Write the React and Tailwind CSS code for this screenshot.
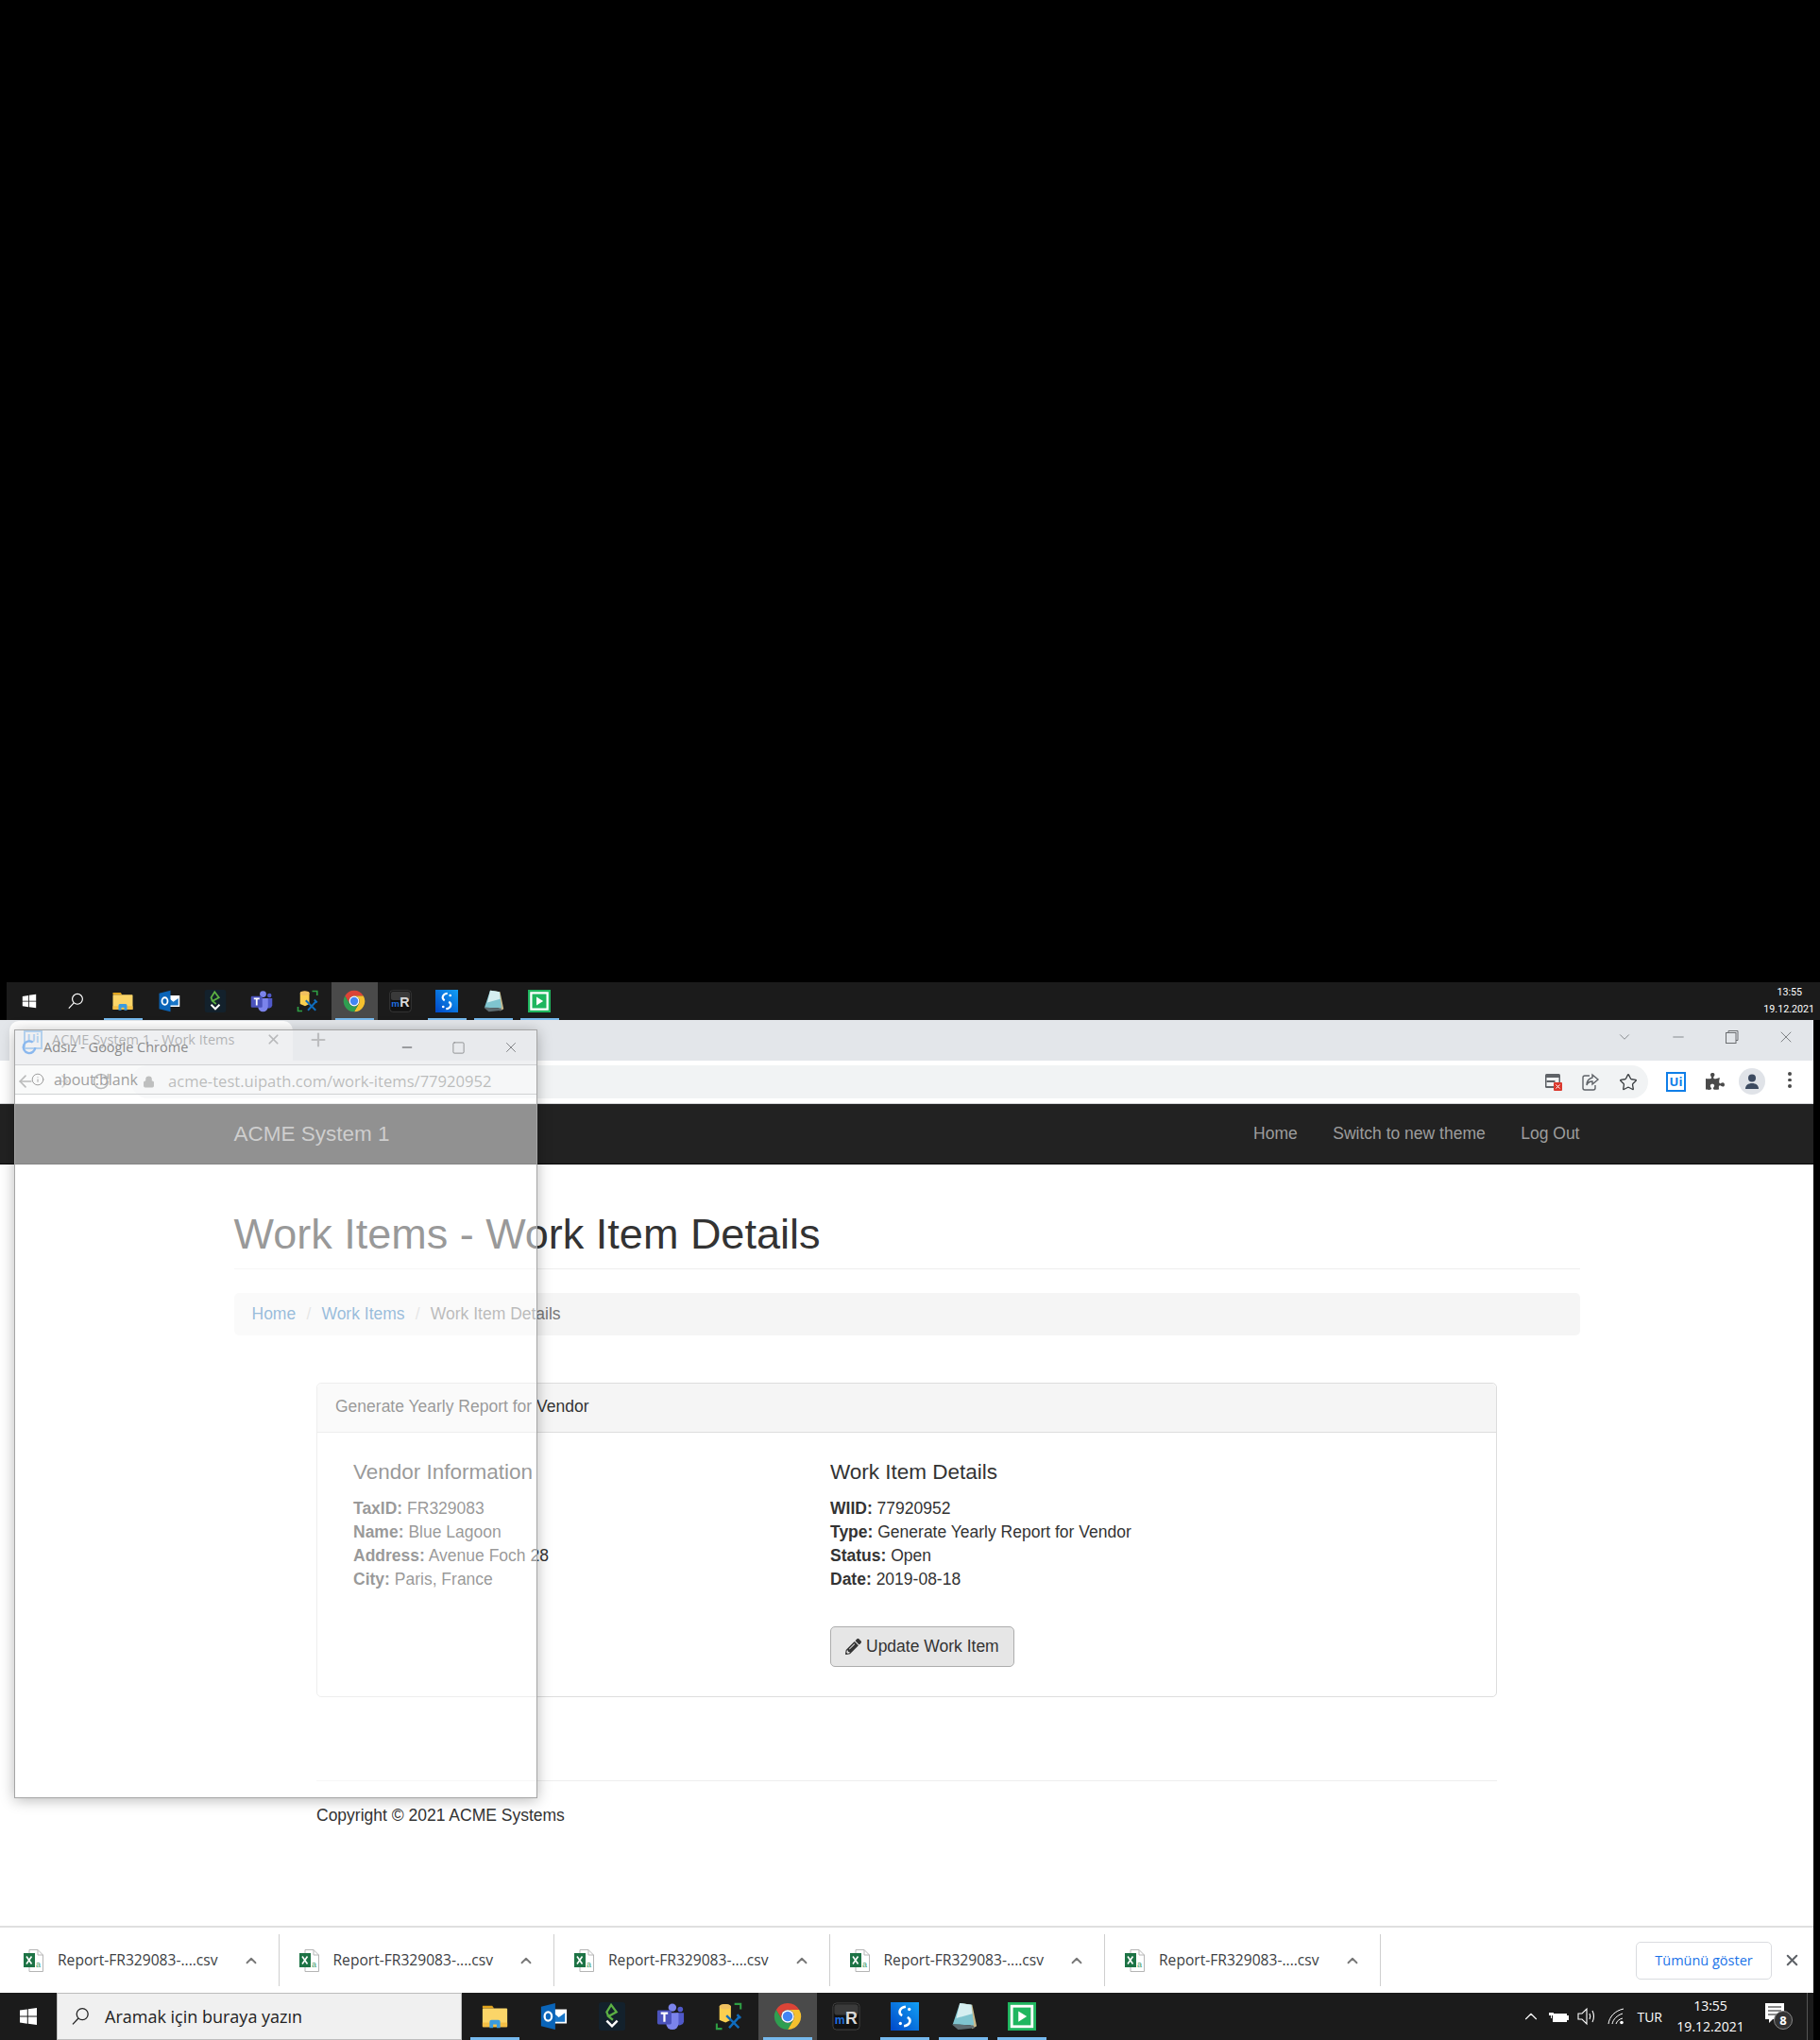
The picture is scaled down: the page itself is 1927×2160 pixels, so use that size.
import { FaPuzzlePiece, FaPencilAlt } from 'react-icons/fa'
import { Star, Lock, X, Plus, ChevronUp, ChevronDown, Minus, Square, RotateCw, ArrowLeft, ArrowRight, Info } from 'lucide-react'

const UI_FONT = { fontFamily: '"Open Sans", "Noto Sans", sans-serif' }

// ---- taskbar app icons, all on a 32 box ----
function WinLogo({ size = 20 }) {
  return (
    <svg width={size} height={size} viewBox="0 0 20 20" fill="#fff">
      <path d="M1 3.6 8.8 2.4v7.2H1zM9.8 2.3 19 1v8.6H9.8zM1 10.6h7.8v7.1L1 16.5zM9.8 10.6H19V19l-9.2-1.3z" />
    </svg>
  )
}

function SearchGlass({ size = 20 }) {
  return (
    <svg width={size} height={size} viewBox="0 0 20 20" fill="none" stroke="#fff" strokeWidth="1.3">
      <circle cx="12.2" cy="7.6" r="6" />
      <path d="M8 12 2 18.4" />
    </svg>
  )
}

function Explorer() {
  return (
    <svg viewBox="0 0 32 32" className="h-full w-full">
      <path d="M2 4h11l2 3H2z" fill="#e0a31c" />
      <rect x="2" y="7" width="28" height="21" rx="1" fill="#fbd568" />
      <path d="M2 23h28v5H2z" fill="#f4bf45" />
      <path d="M10 29v-7a2 2 0 0 1 2-2h8a2 2 0 0 1 2 2v7h-4v-4h-4v4z" fill="#3a9be0" />
    </svg>
  )
}

function Outlook() {
  return (
    <svg viewBox="0 0 32 32" className="h-full w-full">
      <rect x="14" y="8" width="17" height="16" fill="#fff" />
      <path d="M16 12l6 5 7-5v10H16z" fill="#1976c8" />
      <path d="M2 5 18 1v30L2 27z" fill="#0a64b8" />
      <ellipse cx="10" cy="16" rx="4" ry="5" fill="none" stroke="#fff" strokeWidth="2.4" />
    </svg>
  )
}

function SApp() {
  return (
    <svg viewBox="0 0 32 32" className="h-full w-full">
      <rect x="1" y="0" width="30" height="32" rx="3" fill="#13212c" />
      <path d="M12 16 10 11l5-8 6 8-9 5 5 4" fill="none" stroke="#5cb043" strokeWidth="2.4" />
      <path d="m10 21 6 6 6-6" fill="none" stroke="#fff" strokeWidth="2.6" />
    </svg>
  )
}

function Teams() {
  return (
    <svg viewBox="0 0 32 32" className="h-full w-full">
      <circle cx="18" cy="6" r="4.5" fill="#7b83eb" />
      <circle cx="27" cy="8" r="3" fill="#5059c9" />
      <path d="M22 12h9v10a5 5 0 0 1-9 2z" fill="#5059c9" />
      <path d="M11 12h14v12a7 7 0 0 1-14 0z" fill="#7b83eb" />
      <rect x="1" y="9" width="16" height="16" rx="1.5" fill="#4b53bc" />
      <path d="M5 12.5h8M9 12.5V22" stroke="#fff" strokeWidth="2.4" fill="none" />
    </svg>
  )
}

function ToolsApp() {
  return (
    <svg viewBox="0 0 32 32" className="h-full w-full">
      <path d="M5 5a6.5 3 0 0 1 13 0v15l-6 3-7-3z" fill="#fbcf4f" />
      <ellipse cx="11.5" cy="5" rx="6.5" ry="3" fill="#f0c060" />
      <path d="M22 2h7v6M2 24v6h6" fill="none" stroke="#2f9e44" strokeWidth="2.2" />
      <path d="m16 18 11 11M27 17 16 29M25 14l4 4M13 15l4 4" stroke="#0f6cbd" strokeWidth="2.6" fill="none" />
    </svg>
  )
}

function ChromeLogo() {
  return (
    <svg viewBox="0 0 32 32" className="h-full w-full">
      <path d="M16 1a15 15 0 0 1 13 7.5H16a7.5 7.5 0 0 0-6.5 11.25L3 8.5A15 15 0 0 1 16 1z" fill="#db4437" />
      <path d="M29 8.5A15 15 0 0 1 16 31l6.5-11.25A7.5 7.5 0 0 0 16 8.5z" fill="#f5c02e" />
      <path d="M3 8.5l6.5 11.25a7.5 7.5 0 0 0 13 0L16 31A15 15 0 0 1 3 8.5z" fill="#2f9e50" />
      <circle cx="16" cy="16" r="7.2" fill="#fff" />
      <circle cx="16" cy="16" r="5.6" fill="#4285f4" />
    </svg>
  )
}

function MrApp() {
  return (
    <svg viewBox="0 0 32 32" className="h-full w-full">
      <rect x="1" y="1" width="30" height="30" rx="4" fill="#111" stroke="#444" />
      <rect x="2.5" y="2.5" width="27" height="12" rx="3" fill="#3a3a3a" />
      <text x="3" y="24" fontSize="13" fontWeight="700" fill="#1f6fe0" fontFamily="Liberation Sans, sans-serif">m</text>
      <text x="15" y="24" fontSize="19" fontWeight="700" fill="#d8d8d8" fontFamily="Liberation Sans, sans-serif">R</text>
    </svg>
  )
}

function BlueS() {
  return (
    <svg viewBox="0 0 32 32" className="h-full w-full">
      <defs>
        <linearGradient id="blueS" x1="0" y1="1" x2="1" y2="0">
          <stop offset="0" stopColor="#0047c8" />
          <stop offset="1" stopColor="#12a0f4" />
        </linearGradient>
      </defs>
      <rect width="32" height="32" fill="url(#blueS)" />
      <path d="M17 5c-7 1-9 7-4 10" fill="none" stroke="#fff" strokeWidth="2.8" />
      <path d="M15 27c7-1 9-7 4-10" fill="none" stroke="#fff" strokeWidth="2.8" />
      <circle cx="21" cy="8" r="1.8" fill="#fff" />
      <circle cx="11" cy="24" r="1.8" fill="#fff" />
    </svg>
  )
}

function NotepadApp() {
  return (
    <svg viewBox="0 0 32 32" className="h-full w-full">
      <path d="M13 1 26 3l5 24-5 3z" fill="#c9b98a" />
      <path d="M12 1 25 3l3 23-24-1z" fill="#7fc4cf" />
      <path d="M12 1 25 3l1 10L8 18z" fill="#d5eef0" />
      <path d="M3 25 27 26l2 3-19 2z" fill="#5d6b70" />
    </svg>
  )
}

function GreenPlay() {
  return (
    <svg viewBox="0 0 32 32" className="h-full w-full">
      <rect width="32" height="32" fill="#1fb65f" />
      <rect x="3" y="3" width="26" height="26" fill="#fff" />
      <rect x="6" y="6" width="20" height="20" fill="#1fb65f" />
      <path d="M12 10v12l9.5-6z" fill="#fff" />
    </svg>
  )
}

const apps = [
  { Icon: Explorer, bar: true },
  { Icon: Outlook },
  { Icon: SApp },
  { Icon: Teams },
  { Icon: ToolsApp },
  { Icon: ChromeLogo, bar: true, active: true },
  { Icon: MrApp },
  { Icon: BlueS, bar: true },
  { Icon: NotepadApp, bar: true },
  { Icon: GreenPlay, bar: true },
]

function TopTaskbar() {
  return (
    <div className="ml-[7px] flex h-[40px] items-center bg-[#1b1b1b] text-white">
      <div className="flex h-full w-[48px] items-center justify-center"><WinLogo size={16} /></div>
      <div className="flex h-full w-[50.5px] items-center justify-center"><SearchGlass size={18} /></div>
      {apps.map(({ Icon, bar, active }, i) => (
        <div key={i} className={`relative flex h-full w-[49px] items-center justify-center ${active ? 'bg-[#4a4a4a]' : ''}`}>
          <div className="h-[24px] w-[24px]"><Icon /></div>
          {bar && <div className="absolute inset-x-[4px] bottom-0 h-[2px] bg-[#76b9ed]" />}
        </div>
      ))}
      <div className="ml-auto mr-[6px] flex flex-col items-end text-[10.7px] leading-[18px]" style={{ fontFamily: 'Roboto, sans-serif' }}>
        <span className="mr-[13px]">13:55</span>
        <span>19.12.2021</span>
      </div>
    </div>
  )
}

function BottomTaskbar() {
  return (
    <div className="flex h-[50px] items-center bg-[#1b1b1b] text-white">
      <div className="flex h-full w-[60px] items-center justify-center"><WinLogo size={20} /></div>
      <div className="flex h-full w-[429px] items-center border border-[#bdbdbd] bg-[#f0f0f0] pl-[14px] text-[18px] text-[#222]" style={UI_FONT}>
        <svg width="20" height="20" viewBox="0 0 20 20" fill="none" stroke="#222" strokeWidth="1.3">
          <circle cx="12.2" cy="7.6" r="6" />
          <path d="M8 12 2 18.4" />
        </svg>
        <span className="ml-[16px]">Aramak için buraya yazın</span>
      </div>
      <div className="flex h-full pl-[4px]">
        {apps.map(({ Icon, bar, active }, i) => (
          <div key={i} className={`relative flex h-full w-[62px] items-center justify-center ${active ? 'bg-[#4a4a4a]' : ''}`}>
            <div className="h-[30px] w-[30px]"><Icon /></div>
            {bar && <div className="absolute inset-x-[5px] bottom-0 h-[3px] bg-[#76b9ed]" />}
          </div>
        ))}
      </div>
      <div className="ml-auto flex h-full items-center" style={UI_FONT}>
        <ChevronUp size={22} strokeWidth={1.2} className="text-white" />
        <svg width="24" height="16" viewBox="0 0 24 16" className="ml-[5px]" fill="#fff">
          <path d="M4 1v3M7 1v3M3 4h5v3H6v3H5V7H3z" />
          <rect x="7" y="5" width="15" height="9" />
          <rect x="22" y="7" width="2" height="5" />
        </svg>
        <svg width="22" height="20" viewBox="0 0 22 20" className="ml-[8.5px]" fill="none" stroke="#fff" strokeWidth="1.1">
          <path d="M1 7h4l5-5v16l-5-5H1zM13 7c1 2 1 4 0 6M16 4c2 4 2 8 0 12" />
        </svg>
        <svg width="20" height="18" viewBox="0 0 20 18" className="ml-[10px]" fill="none" stroke="#fff" strokeWidth="1">
          <path d="M1 17C2 9 8 3 17 1M5 17c1-5 5-9 11-11M9 17c1-3 3-5 7-6" />
          <circle cx="15" cy="15.5" r="1.8" fill="#fff" stroke="none" />
        </svg>
        <span className="ml-[11.5px] text-[14px]">TUR</span>
        <div className="ml-[15px] flex w-[72px] flex-col items-center text-[14px] leading-[22px]">
          <span>13:55</span>
          <span>19.12.2021</span>
        </div>
        <div className="relative ml-[21px] h-[30px] w-[30px]">
          <svg width="22" height="24" viewBox="0 0 22 24" fill="#fff">
            <path d="M1 1h20v17H9l-4 4v-4H1z" />
            <path d="M4 5h14M4 9h14M4 13h9" stroke="#1b1b1b" strokeWidth="1.2" />
          </svg>
          <span className="absolute left-[10px] top-[9px] flex h-[20px] w-[20px] items-center justify-center rounded-full border border-[#888] bg-[#333] text-[13px] font-bold leading-none">8</span>
        </div>
        <div className="ml-[15px] mr-[6px] h-full w-px bg-[#555]" />
      </div>
    </div>
  )
}

function UiMark({ size = 20 }) {
  return (
    <div
      className="flex items-center justify-center border-2 border-[#0f7ee8] text-[#0f7ee8]"
      style={{ width: size, height: size, fontSize: size * 0.62, lineHeight: 1 }}
    >
      <span className="font-bold">Ui</span>
    </div>
  )
}

function TabStrip() {
  return (
    <div className="flex h-[43px] items-end bg-[#e3e6ea] pl-[10px]" style={UI_FONT}>
      <div className="flex h-[42px] w-[300px] items-center rounded-t-[10px] bg-white pb-[3px] pl-[15px] pr-[12px]">
        <UiMark size={20} />
        <span className="ml-[10px] text-[14.5px] whitespace-nowrap text-black">ACME System 1 - Work Items</span>
        <X size={17} strokeWidth={2.4} className="ml-auto text-[#222]" />
      </div>
      <Plus size={22} strokeWidth={2.4} className="mb-[11px] ml-[16px] text-[#333]" />
      <div className="ml-auto flex h-full items-center pb-[8px] text-[#6a6d70]">
        <ChevronDown size={18} strokeWidth={1} />
        <Minus size={18} strokeWidth={1} className="ml-[39px]" />
        <svg width="16" height="16" viewBox="0 0 16 16" className="ml-[40px]" fill="none" stroke="currentColor">
          <path d="M4 3.5V1.5h10v10h-2" />
          <rect x="1.5" y="3.5" width="10.5" height="11" />
        </svg>
        <X size={20} strokeWidth={1} className="ml-[39px] mr-[19px]" />
      </div>
    </div>
  )
}

function Toolbar() {
  return (
    <div className="flex h-[46px] items-start border-b border-[#d3d4d6] bg-white pt-[5px] pl-[17px]" style={UI_FONT}>
      <ArrowLeft size={20} strokeWidth={2} className="mt-[7px] text-black" />
      <ArrowRight size={20} strokeWidth={2} className="ml-[19px] mt-[7px] text-[#777]" />
      <RotateCw size={20} strokeWidth={2} className="ml-[21px] mt-[7px] text-black" />
      <div className="ml-[22px] flex h-[35px] w-[1606px] items-center rounded-full bg-[#f1f3f4] pl-[12px] pr-[11px] text-[#111]">
        <Lock size={13} fill="currentColor" />
        <span className="ml-[14px] text-[16.6px] text-black">acme-test.uipath.com/work-items/77920952</span>
        <svg width="20" height="20" viewBox="0 0 20 20" className="ml-auto">
          <rect x="1" y="1" width="16" height="15" rx="1.5" fill="#5f6368" />
          <rect x="2.5" y="5" width="13" height="9" fill="#f1f3f4" />
          <path d="M2.5 9h9" stroke="#5f6368" strokeWidth="2" />
          <rect x="10" y="10" width="9" height="9" rx="1" fill="#db3a2f" />
          <path d="m12.5 12.5 4 4m0-4-4 4" stroke="#fff" />
        </svg>
        <svg width="20" height="20" viewBox="0 0 20 20" className="ml-[19px]" fill="none" stroke="#5f6368" strokeWidth="1.4">
          <path d="M9 3H4a2 2 0 0 0-2 2v11a2 2 0 0 0 2 2h9a2 2 0 0 0 2-2v-3" />
          <path d="M12 2l6 5-6 5V9c-3 0-5 1-6 4 0-5 2-7 6-8z" />
        </svg>
        <Star size={20} strokeWidth={1.6} className="ml-[20px] text-[#3c4043]" />
      </div>
      <div className="ml-[19px] mt-[7px]"><UiMark size={21} /></div>
      <FaPuzzlePiece size={20} className="ml-[21px] mt-[7px] text-[#4a4a4a]" />
      <div className="ml-[15px] mt-[3px] flex h-[28px] w-[28px] items-center justify-center rounded-full bg-[#e0e3e8]">
        <svg width="18" height="18" viewBox="0 0 18 18" fill="#3c4a60">
          <circle cx="9" cy="5.5" r="4" />
          <path d="M2 17c0-4 3-6 7-6s7 2 7 6z" />
        </svg>
      </div>
      <div className="ml-[24px] mt-[7px] flex flex-col gap-[3px]">
        <span className="h-[3.5px] w-[3.5px] rounded-full bg-[#4a4a4a]" />
        <span className="h-[3.5px] w-[3.5px] rounded-full bg-[#4a4a4a]" />
        <span className="h-[3.5px] w-[3.5px] rounded-full bg-[#4a4a4a]" />
      </div>
    </div>
  )
}

function Navbar() {
  return (
    <div className="h-[64px] shrink-0 border-b border-[#080808] bg-[#222]">
      <div className="mx-auto flex h-full w-[1425px] items-center justify-between text-[#9d9d9d]">
        <span className="text-[22.5px]">ACME System 1</span>
        <div className="flex gap-[37.5px] text-[17.5px]">
          <span>Home</span>
          <span>Switch to new theme</span>
          <span>Log Out</span>
        </div>
      </div>
    </div>
  )
}

function InfoRow({ label, value }) {
  return (
    <div>
      <b>{label}:</b> {value}
    </div>
  )
}

function WorkItemPage() {
  return (
    <div className="min-h-0 flex-1 overflow-hidden bg-white text-[17.5px] leading-[25px] text-[#333]" style={{ fontFamily: '"Liberation Sans", Arial, sans-serif' }}>
      <Navbar />
      <div className="mx-auto w-[1425px]">
        <div className="mt-[49px] border-b border-[#eee] pb-[11px]">
          <h1 className="text-[45px] leading-[50px] font-medium">Work Items - Work Item Details</h1>
        </div>
        <div className="mt-[25px] flex h-[45px] items-center gap-[11.2px] rounded-[5px] bg-[#f5f5f5] px-[19px]">
          <span className="text-[#337ab7]">Home</span>
          <span className="text-[#ccc]">/</span>
          <span className="text-[#337ab7]">Work Items</span>
          <span className="text-[#ccc]">/</span>
          <span className="text-[#777]">Work Item Details</span>
        </div>

        <div className="mx-auto mt-[50px] w-[1250px]">
          <div className="rounded-[5px] border border-[#ddd]">
            <div className="rounded-t-[5px] border-b border-[#ddd] bg-[#f5f5f5] px-[19px] pt-[12px] pb-[14px]">
              Generate Yearly Report for Vendor
            </div>
            <div className="flex px-[38px] pt-[29px] pb-[31px]">
              <div className="w-[505px]">
                <h4 className="mb-[14px] text-[22.5px] leading-[25px] font-medium">Vendor Information</h4>
                <InfoRow label="TaxID" value="FR329083" />
                <InfoRow label="Name" value="Blue Lagoon" />
                <InfoRow label="Address" value="Avenue Foch 28" />
                <InfoRow label="City" value="Paris, France" />
              </div>
              <div>
                <h4 className="mb-[14px] text-[22.5px] leading-[25px] font-medium">Work Item Details</h4>
                <InfoRow label="WIID" value="77920952" />
                <InfoRow label="Type" value="Generate Yearly Report for Vendor" />
                <InfoRow label="Status" value="Open" />
                <InfoRow label="Date" value="2019-08-18" />
                <button className="mt-[37px] flex h-[43px] items-center gap-[5px] rounded-[5px] border border-[#adadad] bg-[#e6e6e6] px-[15px]">
                  <FaPencilAlt size={17} className="text-[#333]" />
                  Update Work Item
                </button>
              </div>
            </div>
          </div>
          <div className="mt-[88px] border-t border-[#eee] pt-[24px]">Copyright © 2021 ACME Systems</div>
        </div>
      </div>
    </div>
  )
}

function ExcelFile() {
  return (
    <svg width="21" height="24" viewBox="0 0 21 24">
      <path d="M6 .5h9l5.5 5.5v17.5H6z" fill="#fff" stroke="#b5b5b5" />
      <path d="M15 .5V6h5.5" fill="none" stroke="#b5b5b5" />
      <rect x="0" y="4" width="12" height="15" fill="#1d7345" />
      <path d="m3 7.5 5.5 8m0-8-5.5 8" stroke="#fff" strokeWidth="1.6" />
      <text x="13" y="19" fontSize="9" fill="#3c9a68" fontFamily="Liberation Sans, sans-serif">a</text>
    </svg>
  )
}

function DownloadItem() {
  return (
    <div className="flex h-[55px] w-[291.5px] shrink-0 items-center border-r border-[#cfcfcf] pl-[21px] text-[15.6px] text-[#3c4043]">
      <ExcelFile />
      <span className="ml-[15px] whitespace-nowrap">Report-FR329083-....csv</span>
      <ChevronUp size={18} strokeWidth={2.4} className="ml-auto mr-[20px] text-[#777]" />
    </div>
  )
}

function DownloadShelf() {
  return (
    <div className="flex h-[71px] items-center border-t-2 border-[#e0e0e0] bg-white pl-[4px]" style={UI_FONT}>
      {[0, 1, 2, 3, 4].map((i) => <DownloadItem key={i} />)}
      <div className="ml-auto flex h-[40px] w-[144px] items-center justify-center rounded-[5px] border border-[#dadce0] text-[14.5px] font-medium text-[#1a73e8]">
        Tümünü göster
      </div>
      <X size={19} strokeWidth={2.6} className="ml-[12px] mr-[13px] text-[#5f6368]" />
    </div>
  )
}

// translucent about:blank window sitting on top of the browser
function FloatingWindow() {
  return (
    <div
      className="absolute left-[15px] top-[1090px] flex h-[814px] w-[554px] flex-col border border-[#a5a5a5] bg-white/50 shadow-[0_2px_14px_rgba(0,0,0,0.28)]"
      style={UI_FONT}
    >
      <div className="flex h-[37px] shrink-0 items-center border-b border-[#d0d2d4] bg-[#dfe2e6]/50 pl-[6px] text-[#808285]">
        <svg width="18" height="18" viewBox="0 0 20 20" fill="none" stroke="#8ab8ee" strokeWidth="2.6">
          <path d="M17 10a7 7 0 1 1-3-6" />
        </svg>
        <span className="ml-[6px] text-[14.5px] whitespace-nowrap text-[#8a8a8a]">Adsız - Google Chrome</span>
        <Minus size={16} className="ml-auto" />
        <Square size={15} strokeWidth={1.3} className="ml-[39px]" />
        <X size={18} strokeWidth={1.3} className="ml-[39px] mr-[18px]" />
      </div>
      <div className="flex h-[31px] shrink-0 items-center border-b border-[#d0d2d4] bg-[#f4f5f6]/50 pl-[17px] text-[#999]">
        <Info size={14} strokeWidth={1.6} />
        <span className="ml-[10px] text-[16px] whitespace-nowrap text-[#a0a0a0]">about:blank</span>
      </div>
    </div>
  )
}

export default function App() {
  return (
    <div className="relative flex h-[2160px] w-[1927px] flex-col overflow-hidden bg-black">
      <div className="h-[1040px] shrink-0" />
      <TopTaskbar />
      <div className="flex h-[1080px] w-[1920px] flex-col">
        <TabStrip />
        <Toolbar />
        <WorkItemPage />
        <DownloadShelf />
        <BottomTaskbar />
      </div>
      <FloatingWindow />
    </div>
  )
}
